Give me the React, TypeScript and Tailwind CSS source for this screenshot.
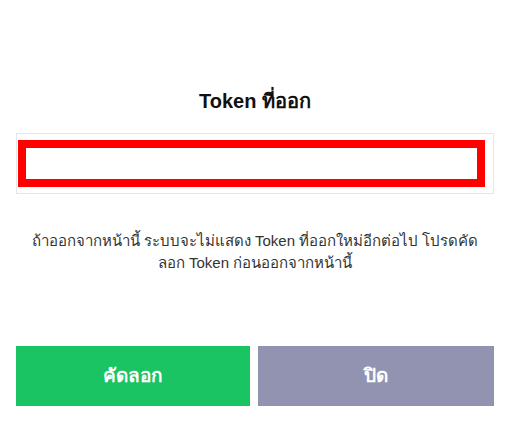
export default function App() {
  return (
    <main
      className="flex h-[423px] w-[512px] flex-col bg-white pl-4 pr-[18px]"
      style={{ fontFamily: '"Liberation Sans", Arial, sans-serif' }}
    >
      <h1 className="mt-[89px] text-center text-[20px] font-bold leading-6 text-[#111]">
        Token ที่ออก
      </h1>

      <div className="mt-[20px] h-[61px] border border-[#e6e6e6] pb-[6px] pl-px pr-[8px] pt-[6px]">
        <div className="h-full border-[8px] border-[#ff0000] bg-white" />
      </div>

      <p className="mt-[36px] text-center text-[15px] leading-[22px] text-[#333]">
        ถ้าออกจากหน้านี้ ระบบจะไม่แสดง Token ที่ออกใหม่อีกต่อไป โปรดคัด
        <br />
        ลอก Token ก่อนออกจากหน้านี้
      </p>

      <div className="mt-auto mb-[17px] flex gap-2">
        <button className="h-[60px] w-[234px] bg-[#1ac462] text-[19px] font-bold text-white">
          คัดลอก
        </button>
        <button className="h-[60px] flex-1 bg-[#9193b0] text-[19px] font-bold text-white">
          ปิด
        </button>
      </div>
    </main>
  );
}
